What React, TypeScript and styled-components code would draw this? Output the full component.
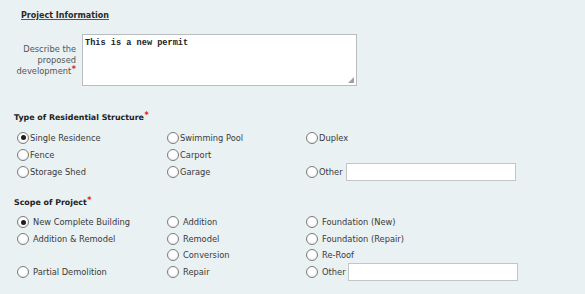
import { FC } from "react";
import styled, { createGlobalStyle } from "styled-components";

const GlobalStyle = createGlobalStyle`
  html, body {
    margin: 0;
    padding: 0;
    background: #e9f1f2;
  }
  body {
    font-family: "DejaVu Sans", Verdana, sans-serif;
    font-size: 8.3px;
    color: #333;
  }
`;

interface OptionType {
  label: string;
  checked?: boolean;
  other?: boolean;
}

// null = empty cell
type Cell = OptionType | null;

const typeRows: Cell[][] = [
  [{ label: "Single Residence", checked: true }, { label: "Swimming Pool" }, { label: "Duplex" }],
  [{ label: "Fence" }, { label: "Carport" }, null],
  [{ label: "Storage Shed" }, { label: "Garage" }, { label: "Other", other: true }],
];

const scopeRows: Cell[][] = [
  [{ label: "New Complete Building", checked: true }, { label: "Addition" }, { label: "Foundation (New)" }],
  [{ label: "Addition & Remodel" }, { label: "Remodel" }, { label: "Foundation (Repair)" }],
  [null, { label: "Conversion" }, { label: "Re-Roof" }],
  [{ label: "Partial Demolition" }, { label: "Repair" }, { label: "Other", other: true }],
];

const Required = () => <Star>*</Star>;

const RadioGroup: FC<{ name: string; rows: Cell[][]; rowHeight: number; spaced?: boolean }> = ({
  name,
  rows,
  rowHeight,
  spaced,
}) => (
  <Grid $rowHeight={rowHeight}>
    {rows.map((row, r) =>
      row.map((cell, c) =>
        cell ? (
          <Option key={`${r}-${c}`} $spaced={spaced}>
            <Radio type="radio" name={name} defaultChecked={cell.checked} />
            <span>{cell.label}</span>
            {cell.other && <OtherInput type="text" $spaced={spaced} />}
          </Option>
        ) : (
          <span key={`${r}-${c}`} />
        )
      )
    )}
  </Grid>
);

const App: FC = () => {
  return (
    <>
      <GlobalStyle />
      <Page>
        <Title>Project Information</Title>
        <DescRow>
          <DescLabel>
            Describe the proposed{" "}
            <LastWord>
              development
              <Required />
            </LastWord>
          </DescLabel>
          <AreaWrap>
            <TextArea defaultValue="This is a new permit" />
            <Grip />
          </AreaWrap>
        </DescRow>

        <Heading $top={26}>
          Type of Residential Structure
          <Required />
        </Heading>
        <RadioGroup name="structure" rows={typeRows} rowHeight={17} />

        <Heading $top={17}>
          Scope of Project
          <Required />
        </Heading>
        <RadioGroup name="scope" rows={scopeRows} rowHeight={16.6} spaced />
      </Page>
    </>
  );
};

const Page = styled.div`
  padding: 10px 0 0 0;
  width: 585px;
  height: 294px;
  box-sizing: border-box;
  overflow: hidden;
`;

const Title = styled.div`
  margin-left: 21px;
  font-weight: bold;
  font-size: 8px;
  line-height: 12px;
  color: #2a2a2a;
  text-decoration: underline;
  text-decoration-color: #555;
  text-underline-offset: 1px;
`;

const DescRow = styled.div`
  display: flex;
  align-items: center;
  gap: 4px;
  margin-top: 12px;
`;

const DescLabel = styled.label`
  width: 76px;
  padding-right: 2px;
  text-align: right;
  line-height: 11px;
  color: #555;
`;

const LastWord = styled.span`
  white-space: nowrap;
`;

const AreaWrap = styled.div`
  position: relative;
  width: 275px;
  height: 52px;
`;

const TextArea = styled.textarea`
  box-sizing: border-box;
  width: 100%;
  height: 100%;
  margin: 0;
  padding: 3px 2px;
  border: 1px solid #b9bdc0;
  background: #fff;
  resize: none;
  font-family: "Liberation Mono", "Courier New", monospace;
  font-weight: bold;
  font-size: 8.6px;
  line-height: 10px;
  color: #222;
  outline: none;
`;

const Grip = styled.span`
  position: absolute;
  right: 3px;
  bottom: 3px;
  width: 6px;
  height: 6px;
  background: radial-gradient(circle, #9a9a9a 0.7px, transparent 0.8px) 0 0 / 2px 2px;
  clip-path: polygon(100% 0, 100% 100%, 0 100%);
`;

const Heading = styled.div<{ $top: number }>`
  margin: ${(p) => p.$top}px 0 5px 14px;
  font-weight: bold;
  font-size: 7.9px;
  line-height: 12px;
  color: #222;
`;

const Star = styled.span`
  display: inline-block;
  margin-left: 0.5px;
  color: #e0201c;
  font-size: 8px;
  font-weight: bold;
  line-height: 8px;
  vertical-align: top;
`;

const Grid = styled.div<{ $rowHeight: number }>`
  display: grid;
  grid-template-columns: 150px 139px 1fr;
  grid-auto-rows: ${(p) => p.$rowHeight}px;
  padding-left: 17px;
`;

const Option = styled.label<{ $spaced?: boolean }>`
  display: flex;
  align-items: center;
  gap: ${(p) => (p.$spaced ? 4 : 1)}px;
  color: #3a3a3a;
  white-space: nowrap;
`;

const Radio = styled.input`
  appearance: none;
  box-sizing: border-box;
  width: 12px;
  height: 12px;
  margin: 0;
  border-radius: 50%;
  border: 1px solid #7c7c7c;
  background: radial-gradient(circle at 50% 40%, #ffffff 40%, #e4e4e4 100%);
  position: relative;
  flex-shrink: 0;

  &:checked::after {
    content: "";
    position: absolute;
    left: 2.5px;
    top: 2.5px;
    width: 5px;
    height: 5px;
    border-radius: 50%;
    background: #1e1e1e;
  }
`;

const OtherInput = styled.input<{ $spaced?: boolean }>`
  box-sizing: border-box;
  width: 170px;
  height: 18px;
  margin: 0 0 0 ${(p) => (p.$spaced ? -2 : 2)}px;
  border: 1px solid #c3c6c8;
  background: #fff;
  font-size: 8px;
  outline: none;
`;

export default App;
